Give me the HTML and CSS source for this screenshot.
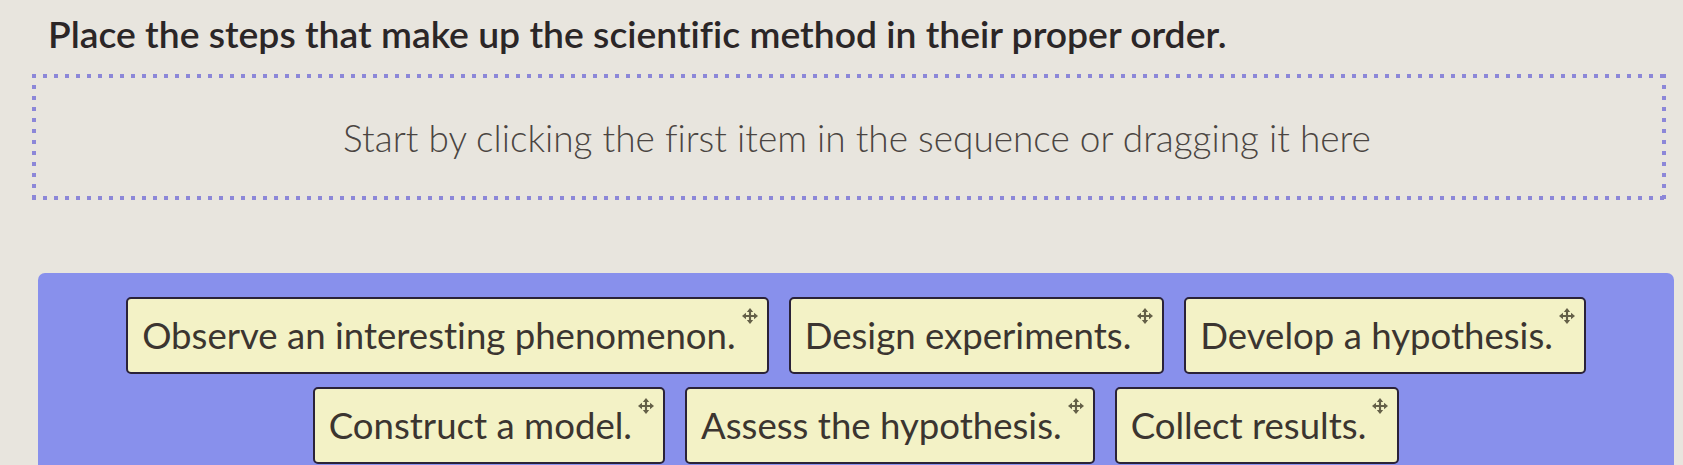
FILE: index.html
```html
<!DOCTYPE html>
<html lang="en">
<head>
<meta charset="utf-8">
<title>Scientific method ordering</title>
<link rel="stylesheet" href="styles.css">
</head>
<body>
<div class="page">
  <h1 class="prompt">Place the steps that make up the scientific method in their proper order.</h1>
  <div class="dropzone">
    <span class="hint">Start by clicking the first item in the sequence or dragging it here</span>
  </div>
  <div class="bank">
    <div class="row">
      <div class="tile"><span class="label">Observe an interesting phenomenon.</span><svg class="move" viewBox="0 0 12 12"><path d="M6 2v8M2 6h8" /><polygon points="6,0 3.6,3 8.4,3"/><polygon points="6,12 3.6,9 8.4,9"/><polygon points="0,6 3,3.6 3,8.4"/><polygon points="12,6 9,3.6 9,8.4"/></svg></div>
      <div class="tile"><span class="label">Design experiments.</span><svg class="move" viewBox="0 0 12 12"><path d="M6 2v8M2 6h8" /><polygon points="6,0 3.6,3 8.4,3"/><polygon points="6,12 3.6,9 8.4,9"/><polygon points="0,6 3,3.6 3,8.4"/><polygon points="12,6 9,3.6 9,8.4"/></svg></div>
      <div class="tile"><span class="label">Develop a hypothesis.</span><svg class="move" viewBox="0 0 12 12"><path d="M6 2v8M2 6h8" /><polygon points="6,0 3.6,3 8.4,3"/><polygon points="6,12 3.6,9 8.4,9"/><polygon points="0,6 3,3.6 3,8.4"/><polygon points="12,6 9,3.6 9,8.4"/></svg></div>
    </div>
    <div class="row">
      <div class="tile"><span class="label">Construct a model.</span><svg class="move" viewBox="0 0 12 12"><path d="M6 2v8M2 6h8" /><polygon points="6,0 3.6,3 8.4,3"/><polygon points="6,12 3.6,9 8.4,9"/><polygon points="0,6 3,3.6 3,8.4"/><polygon points="12,6 9,3.6 9,8.4"/></svg></div>
      <div class="tile"><span class="label">Assess the hypothesis.</span><svg class="move" viewBox="0 0 12 12"><path d="M6 2v8M2 6h8" /><polygon points="6,0 3.6,3 8.4,3"/><polygon points="6,12 3.6,9 8.4,9"/><polygon points="0,6 3,3.6 3,8.4"/><polygon points="12,6 9,3.6 9,8.4"/></svg></div>
      <div class="tile"><span class="label">Collect results.</span><svg class="move" viewBox="0 0 12 12"><path d="M6 2v8M2 6h8" /><polygon points="6,0 3.6,3 8.4,3"/><polygon points="6,12 3.6,9 8.4,9"/><polygon points="0,6 3,3.6 3,8.4"/><polygon points="12,6 9,3.6 9,8.4"/></svg></div>
    </div>
  </div>
</div>
</body>
</html>
```
FILE: styles.css
```css
* { box-sizing: border-box; }
html, body { margin: 0; padding: 0; }
body {
  background: #e8e5de;
  font-family: Lato, "Liberation Sans", sans-serif;
  font-variant-ligatures: none;
  color: #2a2526;
  width: 1683px;
  height: 465px;
  overflow: hidden;
}
.page {
  display: flex;
  flex-direction: column;
  padding-top: 10px;
}
.prompt {
  margin: 0 0 16px 48px;
  font-size: 37.3px;
  font-weight: 600;
  line-height: 48px;
  color: #2b2627;
}
.dropzone {
  margin-left: 32px;
  width: 1634px;
  height: 126px;
  display: flex;
  align-items: center;
  justify-content: center;
  background:
    repeating-linear-gradient(90deg, #8c87d8 0 4px, transparent 4px 11px) left top / 100% 4px no-repeat,
    repeating-linear-gradient(90deg, #8c87d8 0 4px, transparent 4px 11px) left bottom / 100% 4px no-repeat,
    repeating-linear-gradient(180deg, #8c87d8 0 4px, transparent 4px 11px) left top / 4px 100% no-repeat,
    repeating-linear-gradient(180deg, #8c87d8 0 4px, transparent 4px 11px) right top / 4px 100% no-repeat;
}
.hint {
  font-size: 37px;
  font-weight: 300;
  color: #4b4542;
  padding-left: 16px;
}
.bank {
  margin: 73px 0 0 38px;
  width: 1636px;
  height: 200px;
  background: #8890ec;
  border-radius: 7px 7px 0 0;
  padding-top: 24px;
  display: flex;
  flex-direction: column;
  align-items: center;
  gap: 13px;
}
.row {
  display: flex;
  gap: 20px;
  justify-content: center;
}
.tile {
  position: relative;
  height: 77px;
  display: flex;
  align-items: center;
  padding: 0 31px 0 14px;
  background: #f3f2c6;
  border: 2px solid #2a2238;
  border-radius: 5px;
}
.label {
  font-size: 36.6px;
  color: #3b3530;
  line-height: 1;
}
.move {
  position: absolute;
  top: 9px;
  right: 9px;
  width: 16px;
  height: 16px;
}
.move path { stroke: #646048; stroke-width: 1.6; fill: none; }
.move polygon { fill: #646048; }
```
